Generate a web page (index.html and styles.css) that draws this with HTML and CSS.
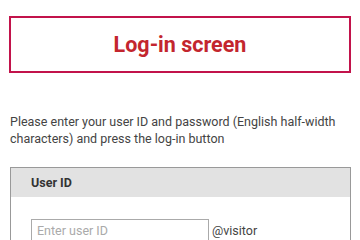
FILE: index.html
```html
<!DOCTYPE html>
<html>
<head>
<meta charset="utf-8">
<link rel="stylesheet" href="styles.css">
</head>
<body>
<div class="page">
  <div class="title-box"><h1 class="title">Log-in screen</h1></div>
  <p class="intro">Please enter your user ID and password (English half-width characters) and press the log-in button</p>
  <div class="panel">
    <div class="panel-head">User ID</div>
    <div class="panel-body">
      <input class="field" type="text" placeholder="Enter user ID">
      <span class="suffix">@visitor</span>
    </div>
  </div>
</div>
</body>
</html>
```
FILE: styles.css
```css
html, body { margin: 0; padding: 0; background: #fff; }
body { font-family: Roboto, "Noto Sans", sans-serif; color: #444; }
.page { padding: 16px 9px 0 9px; }
.title-box {
  border: 2px solid #c2134b;
  height: 53px;
  display: flex;
  align-items: center;
  justify-content: center;
}
.title {
  margin: 0;
  font-size: 21.5px;
  font-weight: 700;
  color: #c3262e;
}
.intro {
  margin: 40px 0 0 1px;
  font-size: 12.5px;
  line-height: 17px;
  color: #444;
}
.panel {
  margin: 20px 0 0 1px;
  border: 1px solid #999;
  border-bottom: none;
}
.panel-head {
  background: #e2e2e2;
  height: 29px;
  padding-left: 20px;
  display: flex;
  align-items: center;
  font-size: 12.5px;
  font-weight: 700;
  color: #333;
}
.panel-body {
  padding: 22px 20px 20px;
  display: flex;
  align-items: center;
  gap: 3px;
}
.field {
  width: 178px;
  height: 22px;
  box-sizing: border-box;
  border: 1px solid #aaa;
  padding: 0 5px;
  font-family: Roboto, sans-serif;
  font-size: 12.5px;
  color: #333;
  margin: 0;
}
.field::placeholder { color: #aaa; }
.suffix { font-size: 12.5px; color: #444; }
```
